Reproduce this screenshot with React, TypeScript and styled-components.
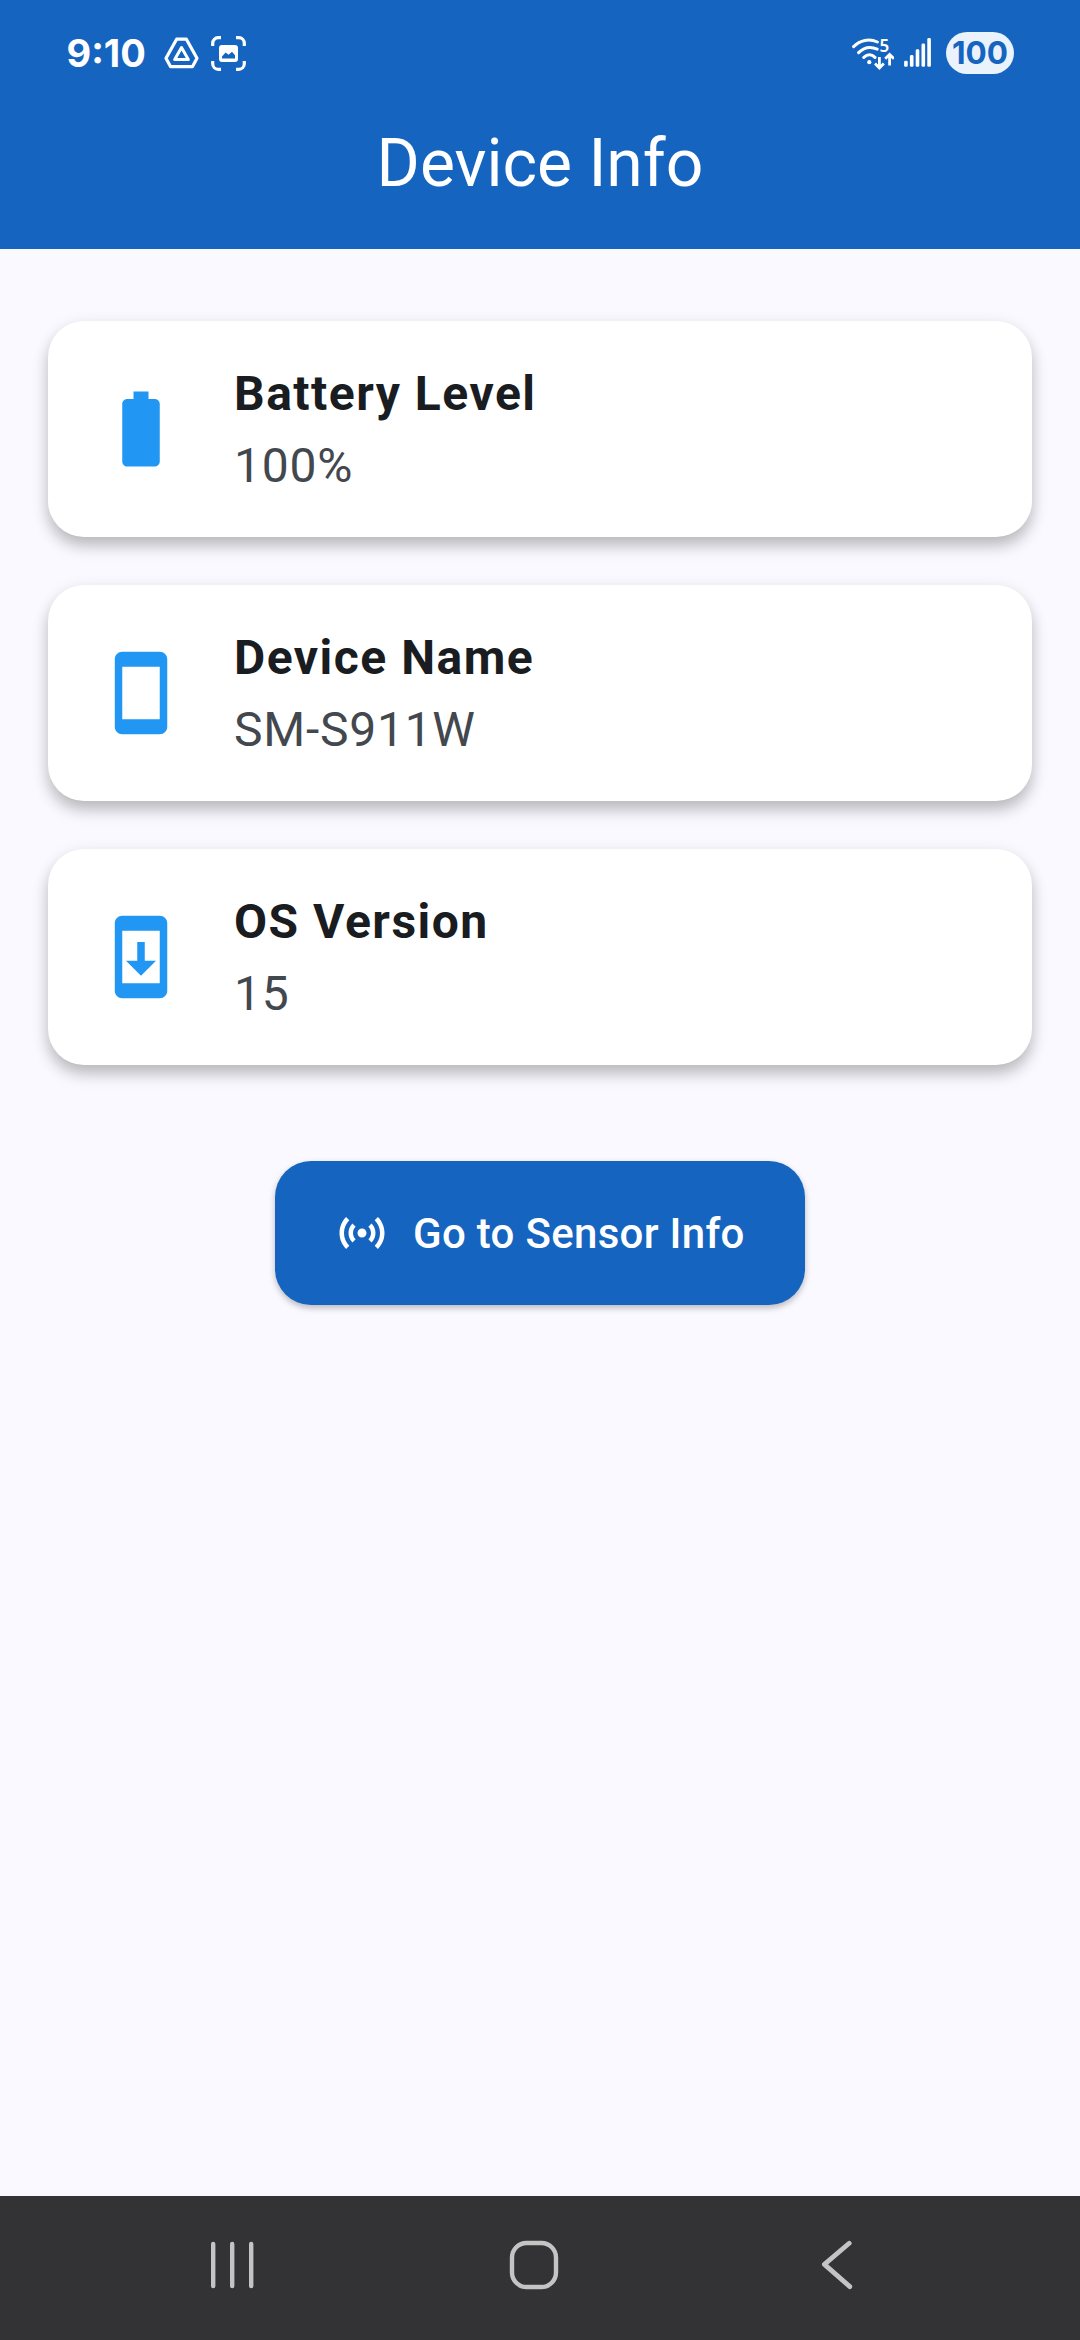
import React from "react";
import styled, { createGlobalStyle } from "styled-components";

const GlobalStyle = createGlobalStyle`
  * { box-sizing: border-box; }
  html, body { margin: 0; padding: 0; background: #faf9ff; }
  body { font-family: Roboto, "Liberation Sans", sans-serif; }
`;

const Screen = styled.div`
  display: flex;
  flex-direction: column;
  width: 1080px;
  height: 2340px;
  background: #faf9ff;
  overflow: hidden;
`;

const Header = styled.header`
  display: flex;
  flex-direction: column;
  height: 249px;
  flex: none;
  background: #1565c0;
  color: #fff;
`;

const StatusBar = styled.div`
  display: flex;
  align-items: center;
  justify-content: space-between;
  height: 81px;
  padding: 25px 66px 0;
`;

const StatusGroup = styled.div`
  display: flex;
  align-items: center;
`;

const Clock = styled.span`
  width: 98px;
  padding-left: 0.5px;
  font: 700 38px/56px Inter, "Noto Sans", sans-serif;
  white-space: nowrap;
`;

const StatusIcon = styled.svg<{ $gap: number }>`
  display: block;
  flex: none;
  margin-right: ${(p) => p.$gap}px;
`;

const NetworkLabel = styled.text`
  font: 600 17px "Noto Sans", sans-serif;
  fill: #fff;
  stroke: none;
`;

const BatteryPill = styled.span`
  display: flex;
  align-items: center;
  justify-content: center;
  width: 68px;
  height: 42px;
  border-radius: 21px;
  background: #eaf2fc;
  color: #1565c0;
  font: 700 31.5px/42px Inter, "Noto Sans", sans-serif;
`;

const Toolbar = styled.div`
  display: flex;
  align-items: center;
  justify-content: center;
  height: 168px;
  padding-bottom: 2px;
`;

const Title = styled.h1`
  margin: 0;
  font-size: 66px;
  line-height: 84px;
  font-weight: 400;
`;

const Content = styled.main`
  display: flex;
  flex: 1;
  flex-direction: column;
  align-items: center;
  padding: 72px 48px 0;
`;

const CardList = styled.div`
  display: flex;
  flex-direction: column;
  gap: 48px;
  width: 100%;
`;

const Card = styled.section`
  display: flex;
  align-items: center;
  gap: 48px;
  height: 216px;
  padding: 0 48px;
  border-radius: 36px;
  background: #fff;
  box-shadow: 0 9px 15px rgba(0, 0, 0, 0.25), 0 0 18px rgba(0, 0, 0, 0.03);
`;

const CardIcon = styled.svg`
  display: block;
  flex: none;
  width: 90px;
  height: 90px;
  fill: #2196f3;
`;

const CardText = styled.div`
  display: flex;
  flex-direction: column;
  padding-top: 2px;
  font-size: 48px;
  line-height: 72px;
`;

const CardTitle = styled.span`
  font-weight: 700;
  letter-spacing: 1.5px;
  color: #191c20;
`;

const CardValue = styled.span`
  font-weight: 400;
  letter-spacing: 0.75px;
  color: #43474e;
`;

const SensorButton = styled.button`
  display: flex;
  align-items: center;
  gap: 24px;
  width: 530px;
  height: 144px;
  margin-top: 96px;
  padding: 0 60px;
  border: 0;
  border-radius: 36px;
  background: #1565c0;
  color: #fff;
  font: 500 42px/60px Roboto, sans-serif;
  letter-spacing: 0.3px;
  white-space: nowrap;
  box-shadow: 0 3px 6px rgba(0, 0, 0, 0.26);
`;

const ButtonIcon = styled.svg`
  display: block;
  flex: none;
  width: 54px;
  height: 54px;
  fill: currentColor;
`;

const ButtonLabel = styled.span`
  padding-top: 1px;
`;

const NavBar = styled.nav`
  display: flex;
  align-items: center;
  justify-content: space-between;
  flex: none;
  height: 144px;
  padding: 0 225px 6px 207px;
  background: #333335;
`;

const NavIcon = styled.svg<{ $weight?: number; $after?: number }>`
  display: block;
  flex: none;
  margin-right: ${(p) => p.$after ?? 0}px;
  fill: none;
  stroke: #c4c4c4;
  stroke-width: ${(p) => p.$weight ?? 4.4};
  stroke-linecap: round;
  stroke-linejoin: round;
`;

const DEVICE_FRAME =
  "M17 1.01L7 1c-1.1 0-1.99.9-1.99 2v18c0 1.1.89 2 1.99 2h10c1.1 0 2-.9 2-2V3c0-1.1-.9-1.99-2-1.99zM17 19H7V5h10v14z";

const rows = [
  {
    title: "Battery Level",
    value: "100%",
    icon: "M15.67 4H14V2h-4v2H8.33C7.6 4 7 4.6 7 5.33v15.33C7 21.4 7.6 22 8.33 22h7.33c.74 0 1.34-.6 1.34-1.33V5.33C17 4.6 16.4 4 15.67 4z",
  },
  { title: "Device Name", value: "SM-S911W", icon: DEVICE_FRAME },
  { title: "OS Version", value: "15", icon: DEVICE_FRAME + "M16 13h-3V8h-2v5H8l4 4 4-4z" },
];

const signalBars = [6, 11.7, 17.5, 23.2, 28.7];

function DriveIcon() {
  return (
    <StatusIcon $gap={12} width="35" height="33" viewBox="0 0 35 33" fill="none" stroke="#fff" strokeWidth="3.2" strokeLinejoin="round">
      <path d="M12.6 2.2h9.8L33 21.3l-4.6 8.4H6.6L2 21.3z" />
      <path d="M17.5 10.6l6.8 12H10.7z" strokeWidth="3" />
    </StatusIcon>
  );
}

function CaptureIcon() {
  return (
    <StatusIcon $gap={0} width="35" height="35" viewBox="0 0 35 35" fill="none">
      <path
        d="M1.7 10V7.2a5.5 5.5 0 0 1 5.5-5.5H10M25 1.7h2.8a5.5 5.5 0 0 1 5.5 5.5V10M33.3 25v2.8a5.5 5.5 0 0 1-5.5 5.5H25M10 33.3H7.2a5.5 5.5 0 0 1-5.5-5.5V25"
        stroke="#fff"
        strokeWidth="3.2"
      />
      <path
        fillRule="evenodd"
        fill="#fff"
        d="M11 9h13a3 3 0 0 1 3 3v11a3 3 0 0 1-3 3H11a3 3 0 0 1-3-3V12a3 3 0 0 1 3-3zM11 22.6h13v-3.4l-3-3.4-3.4 3-3-2.2-3.6 4z"
      />
    </StatusIcon>
  );
}

function WifiIcon() {
  return (
    <StatusIcon $gap={10} width="42" height="34" viewBox="0 0 42 34" fill="none" stroke="#fff" strokeWidth="3">
      <path d="M1.6 10.6C8 4 17.4 2.4 25.4 6M6.6 16.6C12 11.2 18.6 10.2 25.2 13.2M11.8 21.4c3.6-3.4 7.8-3.4 11.2 0" strokeLinecap="round" />
      <circle cx="17.3" cy="26.2" r="2.1" fill="#fff" stroke="none" />
      <NetworkLabel x="27.4" y="15.8">
        5
      </NetworkLabel>
      <path d="M27.4 21v10.4M23 27.6l4.4 4.4 4.4-4.4M37.6 29.6V19.2M33.2 22.8l4.4-4.4 4.4 4.4" strokeWidth="2.8" />
    </StatusIcon>
  );
}

function SignalIcon() {
  return (
    <StatusIcon $gap={15} width="27" height="30" viewBox="0 0 27 30" fill="#fff">
      {signalBars.map((h, i) => (
        <rect key={h} x={0.1 + i * 5.8} y={28.8 - h} width="3.6" height={h} rx="1.4" />
      ))}
    </StatusIcon>
  );
}

export default function App() {
  return (
    <Screen>
      <GlobalStyle />
      <Header>
        <StatusBar>
          <StatusGroup>
            <Clock>9:10</Clock>
            <DriveIcon />
            <CaptureIcon />
          </StatusGroup>
          <StatusGroup>
            <WifiIcon />
            <SignalIcon />
            <BatteryPill>100</BatteryPill>
          </StatusGroup>
        </StatusBar>
        <Toolbar>
          <Title>Device Info</Title>
        </Toolbar>
      </Header>
      <Content>
        <CardList>
          {rows.map((row) => (
            <Card key={row.title}>
              <CardIcon viewBox="0 0 24 24">
                <path d={row.icon} />
              </CardIcon>
              <CardText>
                <CardTitle>{row.title}</CardTitle>
                <CardValue>{row.value}</CardValue>
              </CardText>
            </Card>
          ))}
        </CardList>
        <SensorButton>
          <ButtonIcon viewBox="0 0 24 24">
            <path d="M7.76 16.24C6.67 15.16 6 13.66 6 12s.67-3.16 1.76-4.24l1.42 1.42C8.45 9.9 8 10.9 8 12s.45 2.1 1.17 2.83l-1.41 1.41zm8.48 0C17.33 15.16 18 13.66 18 12s-.67-3.16-1.76-4.24l-1.42 1.42C15.55 9.9 16 10.9 16 12s-.45 2.1-1.17 2.83l1.41 1.41zM12 10c-1.1 0-2 .9-2 2s.9 2 2 2 2-.9 2-2-.9-2-2-2zm8 2c0 2.21-.9 4.21-2.35 5.65l1.42 1.42C20.88 17.26 22 14.76 22 12s-1.12-5.26-2.93-7.07l-1.42 1.42C19.1 7.79 20 9.79 20 12zM6.35 6.35L4.93 4.93C3.12 6.74 2 9.24 2 12s1.12 5.26 2.93 7.07l1.42-1.42C4.9 16.21 4 14.21 4 12s.9-4.21 2.35-5.65z" />
          </ButtonIcon>
          <ButtonLabel>Go to Sensor Info</ButtonLabel>
        </SensorButton>
      </Content>
      <NavBar>
        <NavIcon width="50" height="50" viewBox="0 0 50 50">
          <path d="M6.2 4v42M25.2 4v42M44.2 4v42" />
        </NavIcon>
        <NavIcon $after={8} width="50" height="50" viewBox="0 0 50 50">
          <rect x="3" y="3" width="44" height="44" rx="14.5" />
        </NavIcon>
        <NavIcon $weight={4.8} width="36" height="50" viewBox="0 0 36 50">
          <path d="M30.2 3.2L5.4 24.4l25.4 22.2" />
        </NavIcon>
      </NavBar>
    </Screen>
  );
}
